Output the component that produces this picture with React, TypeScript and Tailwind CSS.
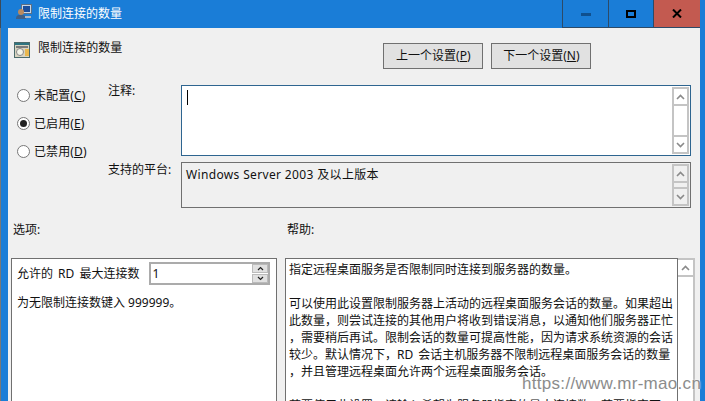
const cjk = "font-['Noto_Sans','Noto_Sans_CJK_SC',sans-serif]";

function Up() {
  return (
    <svg width="9" height="6" viewBox="0 0 9 6">
      <path d="M1 5 L4.5 1.5 L8 5" fill="none" stroke="#8a8a8a" strokeWidth="1.6" />
    </svg>
  );
}
function Down() {
  return (
    <svg width="9" height="6" viewBox="0 0 9 6">
      <path d="M1 1 L4.5 4.5 L8 1" fill="none" stroke="#8a8a8a" strokeWidth="1.6" />
    </svg>
  );
}

function ScrollBar() {
  return (
    <div className="w-[17px] flex flex-col border-2 border-[#c4c4c4]">
      <div className="h-[15px] flex items-center justify-center border-b-2 border-[#c4c4c4] box-content"><Up /></div>
      <div className="flex-1" />
      <div className="h-[15px] flex items-center justify-center border-t-2 border-[#c4c4c4] box-content"><Down /></div>
    </div>
  );
}

function Radio({ label, k, checked }: { label: string; k: string; checked?: boolean }) {
  return (
    <div className="flex items-center h-[17px] text-xs text-[#111]">
      <span className="w-[13px] h-[13px] rounded-full border border-[#777] bg-white flex items-center justify-center mr-[4px]">
        {checked && <span className="w-[7px] h-[7px] rounded-full bg-[#222]" />}
      </span>
      <span className="tracking-[0.1px]">{label}(<u>{k}</u>)</span>
    </div>
  );
}

const help = [
  "指定远程桌面服务是否限制同时连接到服务器的数量。",
  "\u00a0",
  "可以使用此设置限制服务器上活动的远程桌面服务会话的数量。如果超出",
  "此数量，则尝试连接的其他用户将收到错误消息，以通知他们服务器正忙",
  "，需要稍后再试。限制会话的数量可提高性能，因为请求系统资源的会话",
  "较少。默认情况下，RD 会话主机服务器不限制远程桌面服务会话的数量",
  "，并且管理远程桌面允许两个远程桌面服务会话。",
  "\u00a0",
  "若要使用此设置，请输入希望为服务器指定的最大连接数。若要指定不",
];

export default function App() {
  return (
    <div className={`w-[705px] h-[401px] overflow-hidden relative flex flex-col bg-[#1a7dd7] ${cjk} text-xs text-[#111]`}>
      <div className="h-[28px] shrink-0 flex">
        <div className="w-px bg-[#3c4a58]" />
        <div className="flex-1 flex items-center pl-[15px]">
          <svg width="16" height="17" viewBox="0 0 16 17" className="mb-[3px]">
            <rect x="5.5" y="0.5" width="10" height="9" fill="#c9d6e4" stroke="#5b6f86" />
            <rect x="7" y="2" width="7" height="6" fill="#1b4f9c" />
            <circle cx="5" cy="8" r="3" fill="#b98a5f" />
            <path d="M0 15 C0 11 2 11 5 11 C8 11 10 11 10 15 Z" fill="#3f5f86" />
            <path d="M9 12 L15 12 L15 14 L9 14 Z" fill="#a9b8c8" />
          </svg>
          <span className="ml-[6px] text-white">限制连接的数量</span>
        </div>
        <div className="flex h-[28px] border-l border-b border-[#2c4a68]">
          <div className="w-[46px] flex items-center justify-center border-r border-[#2c4a68]">
            <div className="w-[10px] h-[3px] bg-[#0f508f] mt-[2px]" />
          </div>
          <div className="w-[45px] flex items-center justify-center border-r border-[#2c4a68]">
            <div className="w-[10px] h-[8px] border-2 border-black" />
          </div>
          <div className="w-[46px] flex items-center justify-center bg-[#c35a50]">
            <svg width="10" height="9" viewBox="0 0 10 9"><path d="M1 .5 L9 8.5 M9 .5 L1 8.5" stroke="#000" strokeWidth="2" /></svg>
          </div>
        </div>
        <div className="w-[5px]" />
      </div>
      <div className="flex-1 flex min-h-0">
        <div className="w-px bg-[#777]" />
        <div className="w-[7px]" />
        <div className="flex-1 min-w-0 bg-[#f0f0f0] flex flex-col relative">
          <div className="flex pt-[14px] h-[57px] shrink-0">
            <svg width="16" height="16" viewBox="0 0 16 16" className="ml-[6px] shrink-0">
              <rect x="0.5" y="0.5" width="15" height="15" fill="#d8d4c0" stroke="#4b6a6a" />
              <rect x="1" y="1" width="14" height="2" fill="#2f7480" />
              <rect x="2" y="4" width="12" height="2" fill="#7a7a7a" />
              <circle cx="6" cy="10" r="3.5" fill="#f4f4e8" stroke="#888" />
              <rect x="11" y="7" width="4" height="7" fill="#e9b84e" />
            </svg>
            <span className="ml-[8px] mt-[-2px] h-[17px] tracking-[0.05px]">限制连接的数量</span>
            <div className="ml-[261px] mt-[1px] flex gap-[8px]">
              <div className="w-[100px] h-[26px] bg-[#e1e1e1] border border-[#707070] flex items-center justify-center">上一个设置(<u>P</u>)</div>
              <div className="w-[100px] h-[26px] bg-[#e1e1e1] border border-[#707070] flex items-center justify-center">下一个设置(<u>N</u>)</div>
            </div>
          </div>
          <div className="flex shrink-0 h-[123px]">
            <div className="w-[100px] pl-[9px] pt-[2px] flex flex-col gap-[11px] shrink-0">
              <Radio label="未配置" k="C" />
              <Radio label="已启用" k="E" checked />
              <Radio label="已禁用" k="D" />
            </div>
            <div className="w-[73px] shrink-0 -mt-[2px]">
              <div className="h-[79px]">注释:</div>
              <div>支持的平台:</div>
            </div>
            <div className="w-[510px] flex flex-col">
              <div className="h-[72px] border border-[#2e6590] bg-white flex pr-px py-px">
                <div className="flex-1 pl-[5px] pt-[3px]"><div className="w-px h-[15px] bg-black" /></div>
                <ScrollBar />
              </div>
              <div className="h-[46px] mt-[6px] border border-[#707070] flex pr-px py-px">
                <div className="flex-1 pl-[4px] pt-[3px] tracking-[0.35px]">Windows Server 2003 及以上版本</div>
                <ScrollBar />
              </div>
            </div>
          </div>
          <div className="flex shrink-0 h-[50px] pt-[14px]">
            <div className="ml-[5px] w-[274px]">选项:</div>
            <div>帮助:</div>
          </div>
          <div className="flex-1 flex min-h-0 pl-[3px] pr-[5px]">
            <div className="w-[266px] h-[160px] bg-white border border-[#707070] px-[5px] pt-[3px] shrink-0">
              <div className="flex items-center h-[23px]">
                <span className="whitespace-pre [word-spacing:2px]">允许的 RD 最大连接数</span>
                <div className="ml-[10px] w-[121px] h-[23px] border-2 border-[#ababab] flex">
                  <div className="flex-1 pl-[1px] leading-[19px]">1</div>
                  <div className="w-[16px] flex flex-col gap-px">
                    <div className="flex-1 bg-[#e1e1e1] border border-[#bbb] flex items-center justify-center"><svg width="7" height="5" viewBox="0 0 7 5"><path d="M1 4 L3.5 1.5 L6 4" fill="none" stroke="#222" strokeWidth="1.2" /></svg></div>
                    <div className="flex-1 bg-[#e1e1e1] border border-[#bbb] flex items-center justify-center"><svg width="7" height="5" viewBox="0 0 7 5"><path d="M1 1 L3.5 3.5 L6 1" fill="none" stroke="#222" strokeWidth="1.2" /></svg></div>
                  </div>
                </div>
              </div>
              <div className="mt-[10px]">为无限制连接数键入 999999。</div>
            </div>
            <div className="ml-[8px] w-[393px] h-[160px] bg-white border border-[#707070] pl-[3px] pt-[2px] leading-[17px] whitespace-nowrap overflow-hidden shrink-0 [word-spacing:2px]">
              {help.map((l, i) => <div key={i} className="h-[17px]">{l}</div>)}
            </div>
            <div className="w-[17px] h-[160px] flex flex-col border-2 border-[#c4c4c4] bg-white border-l-0">
              <div className="h-[15px] flex items-center justify-center border-b-2 border-[#c4c4c4] box-content"><Up /></div>
            </div>
          </div>
        </div>
        <div className="w-[5px]" />
      </div>
      <div className="absolute left-[522px] top-[374px] whitespace-nowrap text-[17px] leading-[20px] tracking-[0.3px] text-[#8c8c8c] font-['Liberation_Sans',sans-serif] [text-shadow:0_0_2px_#fff]">https://www.mr-mao.cn</div>
    </div>
  );
}
